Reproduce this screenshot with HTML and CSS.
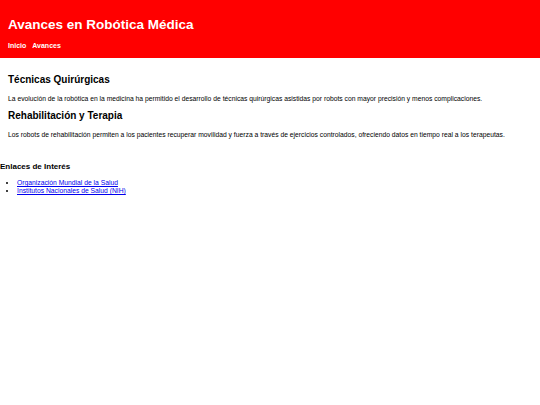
FILE: index.html
```html
<!DOCTYPE html>
<html lang="es">
<head>
<meta charset="utf-8">
<title>Avances en Robótica Médica</title>
<link rel="stylesheet" href="styles.css">
</head>
<body>
<header class="site-header">
  <h1 class="site-title">Avances en Robótica Médica</h1>
  <nav class="site-nav">
    <a href="#" class="nav-link">Inicio</a>
    <a href="#" class="nav-link">Avances</a>
  </nav>
</header>
<main class="content">
  <section class="topic">
    <h2 class="topic-title">Técnicas Quirúrgicas</h2>
    <p class="topic-text">La evolución de la robótica en la medicina ha permitido el desarrollo de técnicas quirúrgicas asistidas por robots con mayor precisión y menos complicaciones.</p>
  </section>
  <section class="topic">
    <h2 class="topic-title">Rehabilitación y Terapia</h2>
    <p class="topic-text">Los robots de rehabilitación permiten a los pacientes recuperar movilidad y fuerza a través de ejercicios controlados, ofreciendo datos en tiempo real a los terapeutas.</p>
  </section>
</main>
<footer class="links">
  <h3 class="links-title">Enlaces de Interés</h3>
  <ul class="links-list">
    <li><a href="#" class="ext-link">Organización Mundial de la Salud</a></li>
    <li><a href="#" class="ext-link">Institutos Nacionales de Salud (NIH)</a></li>
  </ul>
</footer>
</body>
</html>
```

FILE: styles.css
```css
html, body {
  margin: 0;
  padding: 0;
  background: #ffffff;
}
body {
  font-family: "Liberation Sans", Arial, sans-serif;
  font-size: 6.75px;
  color: #000000;
}
.site-header {
  background: #ff0000;
  color: #ffffff;
  padding: 17px 8px 8px;
  height: 33px;
}
.site-title {
  margin: 0;
  font-size: 13.5px;
  line-height: 16px;
  font-weight: bold;
}
.site-nav {
  margin-top: 8px;
  display: flex;
  gap: 6px;
  line-height: 9px;
}
.nav-link {
  color: #ffffff;
  text-decoration: none;
  font-weight: bold;
  font-size: 7px;
}
.content {
  padding: 15px 8px 0;
}
.topic-title {
  margin: 0;
  font-size: 10px;
  line-height: 14px;
  font-weight: bold;
}
.topic-text {
  margin: 8px 0 6px;
  line-height: 8px;
}
.links {
  margin-top: 23px;
}
.links-title {
  margin: 0;
  font-size: 8px;
  line-height: 10px;
  font-weight: bold;
}
.links-list {
  margin: 7px 0 0;
  padding-left: 17px;
  line-height: 8px;
}
.ext-link {
  color: #0000ee;
}
```
